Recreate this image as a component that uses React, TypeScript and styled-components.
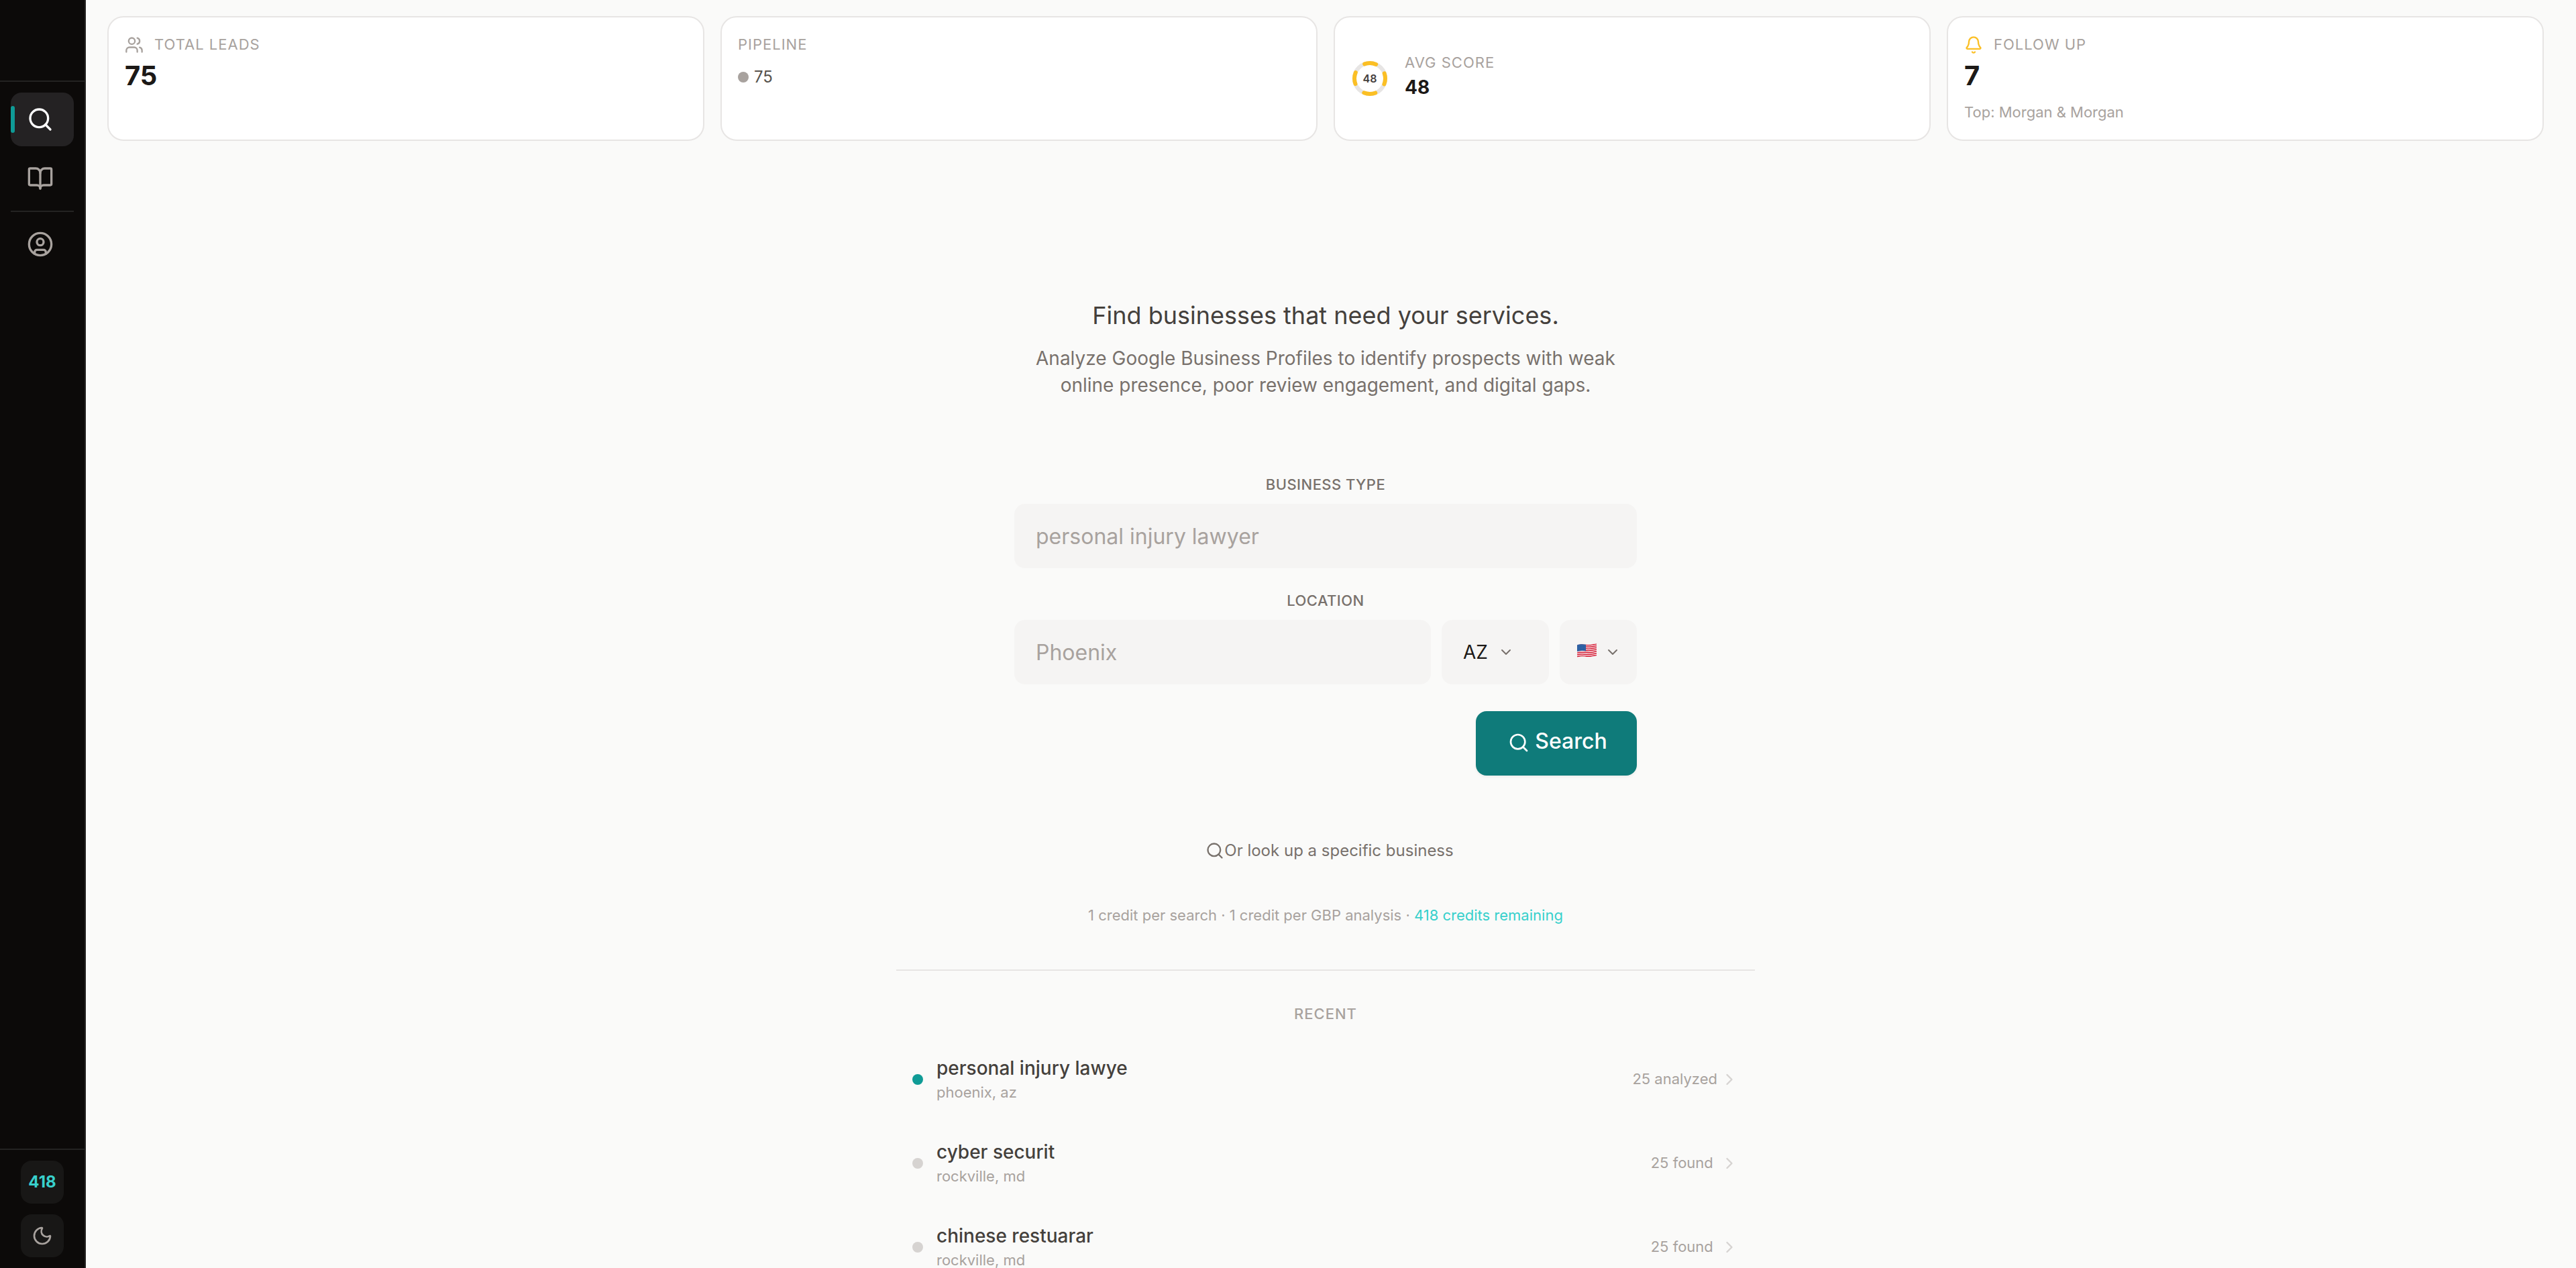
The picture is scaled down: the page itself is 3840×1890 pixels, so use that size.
import React from "react";
import styled, { createGlobalStyle, css } from "styled-components";
import {
  Bell,
  BookOpen,
  ChevronDown,
  ChevronRight,
  CircleUser,
  Moon,
  Search,
  Users,
} from "lucide-react";

const c = {
  page: "#fafaf9",
  ink: "#1c1917",
  body: "#44403c",
  soft: "#57534e",
  muted: "#78716c",
  faint: "#a8a29e",
  pale: "#d6d3d1",
  line: "#e7e5e4",
  field: "#f5f4f3",
  teal: "#0f7b7a",
  tealBright: "#0f9b96",
  tealLight: "#38d0cc",
  amber: "#fbbf24",
  rail: "#0c0a09",
  railLine: "#242322",
};

const Global = createGlobalStyle`
  *, *::before, *::after { box-sizing: border-box; }
  html, body { margin: 0; background: ${c.page}; }
  body {
    font-family: Inter, "Liberation Sans", sans-serif;
    font-size: 28px;
    color: ${c.ink};
  }
  button, input, select { font: inherit; color: inherit; border: 0; margin: 0; }
  button { background: none; cursor: pointer; }
  svg { flex: none; }
`;

const Shell = styled.div`
  display: flex;
  height: 100vh;
  overflow: hidden;
`;

/* ---------- Side rail ---------- */

const Rail = styled.aside`
  flex: none;
  width: 128px;
  display: flex;
  flex-direction: column;
  background: ${c.rail};
  border-right: 2px solid ${c.railLine};
`;

const RailHead = styled.div`
  height: 122px;
  border-bottom: 2px solid ${c.railLine};
`;

const RailNav = styled.nav`
  flex: 1;
  display: flex;
  flex-direction: column;
  gap: 8px;
  padding: 16px;
`;

const RailLink = styled.a<{ $active?: boolean }>`
  position: relative;
  display: flex;
  padding: 20px 24px;
  border-radius: 16px;
  color: ${(p) => (p.$active ? "#ffffff" : c.faint)};
  background: ${(p) => (p.$active ? "#242223" : "transparent")};
  ${(p) =>
    p.$active &&
    css`
      &::before {
        content: "";
        position: absolute;
        left: 0;
        top: 20px;
        width: 6px;
        height: 40px;
        border-radius: 4px;
        background: ${c.tealBright};
      }
    `}
`;

const RailRule = styled.hr`
  width: 100%;
  height: 2px;
  margin: 0;
  border: 0;
  background: ${c.railLine};
`;

const RailFoot = styled.div`
  display: flex;
  flex-direction: column;
  align-items: center;
  gap: 16px;
  padding: 16px;
  border-top: 2px solid ${c.railLine};
`;

const RailTile = styled.button`
  display: flex;
  align-items: center;
  justify-content: center;
  width: 64px;
  height: 64px;
  padding: 0;
  border-radius: 16px;
  background: #181716;
  color: ${c.faint};
`;

const Credits = styled.span`
  font-size: 24px;
  font-weight: 700;
  line-height: 36px;
  color: ${c.tealLight};
`;

/* ---------- Stat cards ---------- */

const Main = styled.main`
  flex: 1;
  min-width: 0;
  overflow-y: auto;
  scrollbar-width: none;
  padding: 24px 48px 48px 32px;
`;

const Stats = styled.section`
  display: grid;
  grid-template-columns: repeat(4, 1fr);
  gap: 24px;
`;

const Card = styled.article`
  padding: 24px;
  border: 2px solid ${c.line};
  border-radius: 24px;
  background: #ffffff;
`;

const ScoreCard = styled(Card)`
  display: flex;
  align-items: center;
  gap: 24px;
`;

const CardHead = styled.div`
  display: flex;
  align-items: center;
  gap: 16px;
`;

const CardLabel = styled.span`
  display: block;
  font-size: 22px;
  line-height: 33px;
  letter-spacing: 1px;
  text-transform: uppercase;
  color: ${c.faint};
`;

const CardValue = styled.div`
  font-size: 40px;
  font-weight: 700;
  line-height: 60px;
`;

const CardNote = styled.div`
  margin-top: 8px;
  font-size: 22px;
  line-height: 33px;
  color: ${c.faint};
`;

const Stage = styled.div`
  display: flex;
  align-items: center;
  gap: 8px;
  margin-top: 14px;
  font-size: 24px;
  line-height: 36px;
  color: ${c.soft};
`;

const Dot = styled.span<{ $color: string }>`
  flex: none;
  width: 16px;
  height: 16px;
  border-radius: 50%;
  background: ${(p) => p.$color};
`;

const Gauge = styled.div`
  display: grid;
  place-items: center;
  > * {
    grid-area: 1 / 1;
  }
`;

const GaugeValue = styled.span`
  font-size: 16px;
  font-weight: 600;
  line-height: 24px;
  color: ${c.body};
`;

const ScoreText = styled.div`
  padding-bottom: 8px;
`;

const ScoreValue = styled.div`
  font-size: 28px;
  font-weight: 700;
  line-height: 40px;
`;

/* ---------- Search ---------- */

const Hero = styled.section`
  display: flex;
  flex-direction: column;
  align-items: center;
  padding-top: 232px;
  text-align: center;
`;

const Title = styled.h1`
  margin: 0;
  font-size: 36px;
  font-weight: 400;
  line-height: 56px;
  color: ${c.body};
`;

const Lead = styled.p`
  max-width: 896px;
  margin: 16px 0 0;
  line-height: 40px;
  color: ${c.muted};
`;

const Form = styled.form`
  display: flex;
  flex-direction: column;
  width: 100%;
  max-width: 928px;
  margin-top: 112px;
`;

const Field = styled.div`
  display: flex;
  flex-direction: column;
  gap: 12px;
  margin-bottom: 32px;
`;

const FieldLabel = styled.label`
  font-size: 22px;
  font-weight: 500;
  line-height: 33px;
  letter-spacing: 0.02em;
  text-transform: uppercase;
  color: ${c.muted};
`;

const FieldRow = styled.div`
  display: flex;
  gap: 16px;
`;

const TextBox = styled.input`
  flex: 1;
  min-width: 0;
  min-height: 96px;
  padding: 0 32px;
  border-radius: 16px;
  background: ${c.field};
  font-size: 32px;
  &::placeholder {
    color: ${c.faint};
    opacity: 1;
  }
`;

const Picker = styled.div<{ $width: number }>`
  flex: none;
  display: grid;
  width: ${(p) => p.$width}px;
  height: 96px;
  > * {
    grid-area: 1 / 1;
  }
`;

const Select = styled.select<{ $iconOnly?: boolean }>`
  appearance: none;
  width: 100%;
  padding: 0 32px;
  border-radius: 16px;
  background: ${c.field};
  font-size: 28px;
  color: ${(p) => (p.$iconOnly ? "transparent" : c.ink)};
`;

const PickerFace = styled.div<{ $end: number }>`
  display: flex;
  align-items: center;
  justify-content: flex-end;
  gap: 12px;
  padding-right: ${(p) => p.$end}px;
  color: ${c.muted};
  pointer-events: none;
`;

const Submit = styled.button`
  align-self: flex-end;
  width: 240px;
  height: 96px;
  margin-top: 8px;
  padding: 0 0 6px 4px;
  border-radius: 16px;
  background: ${c.teal};
  box-shadow: 0 2px 4px rgba(0, 0, 0, 0.06);
  font-size: 32px;
  font-weight: 500;
  line-height: 48px;
  color: #ffffff;
  svg {
    margin-right: 8px;
    vertical-align: middle;
  }
`;

const Lookup = styled.button`
  display: flex;
  align-items: center;
  margin-top: 84px;
  padding: 10px 16px 10px 28px;
  font-size: 24px;
  line-height: 36px;
  color: ${c.muted};
`;

const Pricing = styled.p`
  margin: 52px 0 0;
  font-size: 22px;
  line-height: 33px;
  color: ${c.faint};
`;

const Remaining = styled.span`
  color: ${c.tealLight};
`;

/* ---------- Recent searches ---------- */

const Recent = styled.section`
  width: 100%;
  max-width: 1280px;
  margin: 64px auto 0;
  padding-top: 48px;
  border-top: 2px solid ${c.line};
`;

const RecentTitle = styled.h2`
  margin: 0 0 20px;
  font-size: 22px;
  font-weight: 500;
  line-height: 33px;
  letter-spacing: 1px;
  text-align: center;
  text-transform: uppercase;
  color: ${c.faint};
`;

const RecentList = styled.div`
  display: flex;
  flex-direction: column;
  gap: 4px;
`;

const RecentRow = styled.button`
  display: flex;
  align-items: center;
  gap: 20px;
  width: 100%;
  padding: 24px;
  border-radius: 16px;
  text-align: left;
`;

const RecentText = styled.span`
  flex: 1;
  min-width: 0;
`;

const RecentName = styled.span`
  display: block;
  font-size: 28px;
  font-weight: 500;
  line-height: 40px;
  color: ${c.body};
`;

const RecentPlace = styled.span`
  display: block;
  font-size: 22px;
  line-height: 33px;
  color: ${c.faint};
`;

const RecentCount = styled.span`
  display: flex;
  align-items: center;
  gap: 4px;
  font-size: 22px;
  line-height: 33px;
  white-space: pre;
  color: ${c.faint};
  svg {
    color: ${c.pale};
  }
`;

const recents = [
  { name: "personal injury lawye", place: "phoenix, az", count: "25 analyzed", done: true },
  { name: "cyber securit", place: "rockville, md", count: "25 found ", done: false },
  { name: "chinese restuarar", place: "rockville, md", count: "25 found ", done: false },
];

function ScoreRing() {
  return (
    <svg width="56" height="56" viewBox="0 0 56 56" fill="none" strokeWidth="6" aria-hidden="true">
      <circle cx="28" cy="28" r="23" stroke={c.line} />
      <circle
        cx="28"
        cy="28"
        r="23"
        stroke={c.amber}
        strokeLinecap="round"
        strokeDasharray="17.34 18.79"
        strokeDashoffset="8.67"
      />
    </svg>
  );
}

function FlagUS() {
  const wave =
    "M0 2.4C5 0.8 8.5 1.2 14 1.8C20 2.6 24 0.8 29 0.3V18.4C24 18.8 20 20.7 14 20C8.5 19.2 5 19.4 0 20.8Z";
  return (
    <svg width="29" height="27" viewBox="0 0 29 27" aria-hidden="true">
      <clipPath id="flag-shape">
        <path d={wave} />
      </clipPath>
      <g clipPath="url(#flag-shape)">
        <rect width="29" height="21" fill="#f8f4f4" />
        {[0, 1, 2, 3, 4, 5, 6].map((i) => {
          const y = 2.4 + i * 2.8;
          return (
            <path
              key={i}
              d={`M0 ${y + 0.6}C5 ${y - 1} 8.5 ${y - 0.7} 14 ${y}C20 ${y + 0.8} 24 ${y - 1.1} 29 ${y - 1.5}`}
              stroke="#d4152f"
              strokeWidth="1.5"
              fill="none"
            />
          );
        })}
        <path d="M0 0H13V11.4C8.5 10.7 5 10.8 0 12Z" fill="#265a9e" />
        {[0, 1, 2, 3].map((r) => (
          <path
            key={r}
            d={`M1.2 ${3.6 + r * 2.2}H12.5`}
            stroke="#6f9bd0"
            strokeWidth="0.7"
            strokeDasharray="0.8 1.4"
          />
        ))}
      </g>
    </svg>
  );
}

export default function App() {
  return (
    <>
      <Global />
      <Shell>
        <Rail>
          <RailHead />
          <RailNav aria-label="Main">
            <RailLink href="#search" aria-label="Search" aria-current="page" $active>
              <Search size={40} />
            </RailLink>
            <RailLink href="#library" aria-label="Library">
              <BookOpen size={40} />
            </RailLink>
            <RailRule />
            <RailLink href="#account" aria-label="Account">
              <CircleUser size={40} />
            </RailLink>
          </RailNav>
          <RailFoot>
            <RailTile type="button">
              <Credits>418</Credits>
            </RailTile>
            <RailTile type="button" aria-label="Dark mode">
              <Moon size={32} />
            </RailTile>
          </RailFoot>
        </Rail>

        <Main>
          <Stats>
            <Card>
              <CardHead>
                <Users size={28} color={c.faint} />
                <CardLabel>Total Leads</CardLabel>
              </CardHead>
              <CardValue>75</CardValue>
            </Card>
            <Card>
              <CardLabel>Pipeline</CardLabel>
              <Stage>
                <Dot $color={c.faint} />
                75
              </Stage>
            </Card>
            <ScoreCard>
              <Gauge>
                <ScoreRing />
                <GaugeValue>48</GaugeValue>
              </Gauge>
              <ScoreText>
                <CardLabel>Avg Score</CardLabel>
                <ScoreValue>48</ScoreValue>
              </ScoreText>
            </ScoreCard>
            <Card>
              <CardHead>
                <Bell size={28} color={c.amber} />
                <CardLabel>Follow Up</CardLabel>
              </CardHead>
              <CardValue>7</CardValue>
              <CardNote>Top: Morgan &amp; Morgan</CardNote>
            </Card>
          </Stats>

          <Hero>
            <Title>Find businesses that need your services.</Title>
            <Lead>
              Analyze Google Business Profiles to identify prospects with weak online presence,
              poor review engagement, and digital gaps.
            </Lead>

            <Form onSubmit={(e) => e.preventDefault()}>
              <Field>
                <FieldLabel htmlFor="business-type">Business Type</FieldLabel>
                <FieldRow>
                  <TextBox id="business-type" type="text" placeholder="personal injury lawyer" />
                </FieldRow>
              </Field>
              <Field>
                <FieldLabel htmlFor="city">Location</FieldLabel>
                <FieldRow>
                  <TextBox id="city" type="text" placeholder="Phoenix" />
                  <Picker $width={160}>
                    <Select aria-label="State" defaultValue="AZ">
                      <option value="AZ">AZ</option>
                    </Select>
                    <PickerFace $end={52}>
                      <ChevronDown size={24} />
                    </PickerFace>
                  </Picker>
                  <Picker $width={115}>
                    <Select aria-label="Country" defaultValue="US" $iconOnly>
                      <option value="US" label=" " />
                    </Select>
                    <PickerFace $end={24}>
                      <FlagUS />
                      <ChevronDown size={24} />
                    </PickerFace>
                  </Picker>
                </FieldRow>
              </Field>
              <Submit type="submit">
                <Search size={32} />
                Search
              </Submit>
            </Form>

            <Lookup type="button">
              <Search size={28} />
              Or look up a specific business
            </Lookup>
            <Pricing>
              1 credit per search · 1 credit per GBP analysis ·{" "}
              <Remaining>418 credits remaining</Remaining>
            </Pricing>
          </Hero>

          <Recent>
            <RecentTitle>Recent</RecentTitle>
            <RecentList>
              {recents.map((r) => (
                <RecentRow type="button" key={r.name}>
                  <Dot $color={r.done ? c.tealBright : c.pale} />
                  <RecentText>
                    <RecentName>{r.name}</RecentName>
                    <RecentPlace>{r.place}</RecentPlace>
                  </RecentText>
                  <RecentCount>
                    {r.count}
                    <ChevronRight size={28} />
                  </RecentCount>
                </RecentRow>
              ))}
            </RecentList>
          </Recent>
        </Main>
      </Shell>
    </>
  );
}
